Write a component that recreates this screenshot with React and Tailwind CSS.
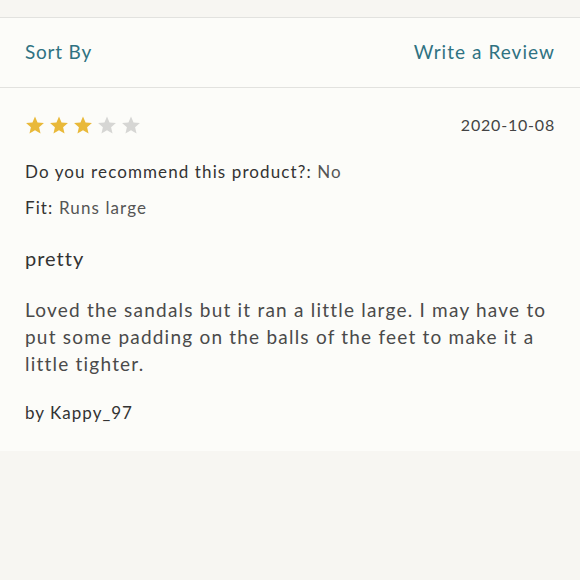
const stars = [1, 2, 3, 4, 5];

function Star({ on }) {
  return (
    <svg width="20" height="20" viewBox="0 0 24 24" className={on ? 'fill-[#e9b93a]' : 'fill-[#d6d6d4]'}>
      <path d="M12 1.8l3.05 7.1 7.7.66-5.84 5.06 1.75 7.52L12 18.2l-6.66 3.94 1.75-7.52L1.25 9.56l7.7-.66z" />
    </svg>
  );
}

export default function App() {
  return (
    <div className="min-h-[580px] bg-[#f7f6f2] pt-[17px] font-['Lato','Noto_Sans',sans-serif] tracking-[0.05em]">
      <div className="border-t border-[#e2e2df] bg-[#fcfcf9]">
        <div className="flex h-[70px] items-center justify-between border-b border-[#e2e2df] px-[25px] text-[19px] text-[#2f7282]">
          <span>Sort By</span>
          <span className="tracking-[0.055em]">Write a Review</span>
        </div>
        <div className="px-[25px] pb-[25px] pt-[25px] text-[#3a3a3a]">
          <div className="flex items-center justify-between">
            <div className="flex gap-[4px]">
              {stars.map((n) => <Star key={n} on={n <= 3} />)}
            </div>
            <span className="text-[16px] text-[#444]">2020-10-08</span>
          </div>
          <p className="mt-[22px] text-[17px] tracking-[0.065em] text-[#333]">
            Do you recommend this product?: <span className="text-[#555]">No</span>
          </p>
          <p className="mt-[10px] text-[17px] tracking-[0.065em] text-[#333]">
            Fit: <span className="text-[#555]">Runs large</span>
          </p>
          <p className="mt-[23px] text-[20px] tracking-[0.05em] text-[#333]">pretty</p>
          <p className="mt-[23px] text-[19px] leading-[27px] tracking-[0.064em] text-[#4a4a4a]">
            Loved the sandals but it ran a little large. I may have to put some padding on the balls of the feet to make it a little tighter.
          </p>
          <p className="mt-[23px] text-[17px] tracking-[0.06em] text-[#333]">by Kappy_97</p>
        </div>
      </div>
    </div>
  );
}
